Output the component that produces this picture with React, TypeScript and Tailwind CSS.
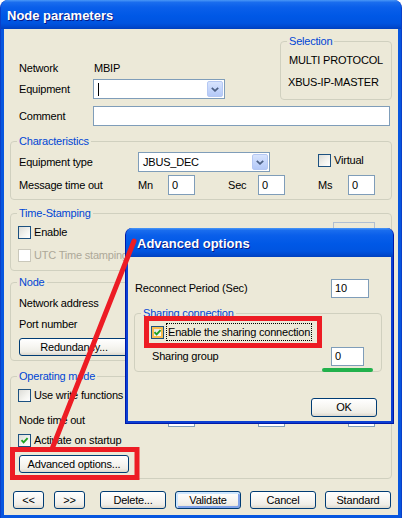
import React from "react";

function Check({ checked = false, disabled = false, hover = false }: { checked?: boolean; disabled?: boolean; hover?: boolean }) {
  const base = disabled
    ? "border-[#CAC8BB] bg-white"
    : "border-[#1C5180] bg-[linear-gradient(135deg,#DCDCD7_0%,#F4F4F0_60%,#FFFFFF_100%)]";
  return (
    <span
      className={`w-[13px] h-[13px] shrink-0 border flex items-center justify-center ${base} ${
        hover ? "shadow-[inset_0_0_0_2px_#F8BD4E]" : ""
      }`}
    >
      {checked && (
        <svg width="7" height="7" viewBox="0 0 7 7" className="overflow-visible">
          <polyline points="0.5,3.2 2.6,5.3 6.6,1.1" fill="none" stroke="#21A121" strokeWidth="1.9" />
        </svg>
      )}
    </span>
  );
}

function TextBox({ value = "", className = "" }: { value?: string; className?: string }) {
  return (
    <div className={`shrink-0 border border-[#7F9DB9] bg-white flex items-center pl-[3px] ${className}`}>{value}</div>
  );
}

function Combo({ value = "", caret = false, className = "" }: { value?: string; caret?: boolean; className?: string }) {
  return (
    <div className={`h-[20px] shrink-0 border border-[#7F9DB9] bg-white flex items-stretch p-[1px] ${className}`}>
      <div className="flex-1 flex items-center pl-[3px]">
        {caret && <span className="w-[1px] h-[13px] bg-black" />}
        {value}
      </div>
      <div className="w-[16px] rounded-[2px] border border-[#B5C8F3] bg-[linear-gradient(180deg,#D8E4FD_0%,#C5D6FB_50%,#B4C9F7_100%)] flex items-center justify-center">
        <svg width="8" height="5" viewBox="0 0 8 5">
          <polyline points="0.8,0.8 4,3.8 7.2,0.8" fill="none" stroke="#4D6185" strokeWidth="1.8" />
        </svg>
      </div>
    </div>
  );
}

function Btn({ children, className = "", focused = false }: { children: React.ReactNode; className?: string; focused?: boolean }) {
  return (
    <div
      className={`shrink-0 border border-[#003C74] rounded-[3px] bg-[linear-gradient(180deg,#FFFFFF_0%,#F7F6F2_45%,#EFEDE6_80%,#DCD7CC_100%)] flex items-center justify-center text-black ${
        focused ? "shadow-[inset_1px_1px_0_1px_#CEE7FF,inset_-1px_-1px_0_1px_#7FA2E8]" : ""
      } ${className}`}
    >
      {children}
    </div>
  );
}

function Legend({ children, className = "-ml-[2px]" }: { children: React.ReactNode; className?: string }) {
  return <legend className={`px-[2px] leading-[13px] text-[#0046D5] ${className}`}>{children}</legend>;
}

export default function App() {
  return (
    <div className="relative w-[402px] h-[518px] bg-white text-[11px] leading-[13px] tracking-[-0.2px] text-black font-['Liberation_Sans',Arial,sans-serif]">
      {/* Main window */}
      <div className="w-full h-full flex flex-col rounded-t-[8px] overflow-hidden bg-[#0756DF] border-l border-r border-[#0A3FC8]">
        <div className="h-[29px] shrink-0 bg-[linear-gradient(180deg,#4A98F6_0%,#1A6DEE_8%,#0A5FEA_25%,#0058E6_55%,#0054E0_80%,#0049CF_92%,#0040BE_100%)] flex items-center pl-[6px] pt-[2px] text-white font-bold text-[13px] tracking-normal [text-shadow:1px_1px_0_#0A1883]">
          Node parameters
        </div>
        <div className="flex-1 mx-[3px] mb-[3px] bg-[#ECE9D8] px-[6px] pt-[6px] flex flex-col">
          {/* top section */}
          <div className="flex h-[65px]">
            <div className="w-[260px] pt-[23px] pl-[9px] flex flex-col gap-[1px]">
              <div className="flex items-center h-[20px]">
                <span className="w-[74px]">Network</span>
                <span className="pl-[1px]">MBIP</span>
              </div>
              <div className="flex items-center h-[20px]">
                <span className="w-[74px]">Equipment</span>
                <Combo caret className="w-[132px]" />
              </div>
            </div>
            <fieldset className="ml-auto w-[112px] h-[65px] border border-[#D0D0BF] rounded-[4px] px-[8px]">
              <Legend>Selection</Legend>
              <div className="mt-[6px]">MULTI PROTOCOL</div>
              <div className="mt-[9px] -ml-px">XBUS-IP-MASTER</div>
            </fieldset>
          </div>

          <div className="mt-[6px] flex items-center h-[20px] pl-[9px] pr-[2px]">
            <span className="w-[74px]">Comment</span>
            <TextBox className="flex-1 h-[20px]" />
          </div>

          {/* Characteristics */}
          <fieldset className="mt-[9px] border border-[#D0D0BF] rounded-[4px] px-[8px] pb-[4px]">
            <Legend>Characteristics</Legend>
            <div className="mt-[4px] h-[20px] flex items-start">
              <span className="w-[119px] self-center">Equipment type</span>
              <Combo value="JBUS_DEC" className="w-[132px]" />
              <div className="ml-[48px] mt-[2px] flex items-center gap-[3px]">
                <Check />
                <span>Virtual</span>
              </div>
            </div>
            <div className="mt-[3px] h-[20px] flex items-center">
              <span className="w-[119px]">Message time out</span>
              <span className="w-[30px]">Mn</span>
              <TextBox value="0" className="w-[27px] h-[20px]" />
              <span className="ml-[33px] w-[30px]">Sec</span>
              <TextBox value="0" className="w-[27px] h-[20px]" />
              <span className="ml-[33px] w-[30px]">Ms</span>
              <TextBox value="0" className="w-[27px] h-[20px]" />
            </div>
          </fieldset>

          {/* Time-Stamping */}
          <fieldset className="mt-[7px] border border-[#D0D0BF] rounded-[4px] px-[8px] pb-[5px]">
            <Legend>Time-Stamping</Legend>
            <div className="mt-[2px] h-[20px] flex items-center">
              <div className="-ml-px flex items-center gap-[3px]">
                <Check />
                <span>Enable</span>
              </div>
              <div className="ml-auto mr-[8px] w-[42px] h-[20px] border border-[#AFBFD2] bg-[#ECE9D8]" />
            </div>
            <div className="mt-[3px] h-[20px] flex items-center">
              <div className="-ml-px flex items-center gap-[3px] text-[#ACA899]">
                <Check disabled />
                <span>UTC Time stamping</span>
              </div>
            </div>
          </fieldset>

          {/* Node */}
          <fieldset className="mt-[5px] border border-[#D0D0BF] rounded-[4px] px-[8px] pb-[4px]">
            <Legend>Node</Legend>
            <div className="mt-[4px] h-[20px] flex items-center">Network address</div>
            <div className="mt-[1px] h-[20px] flex items-center">Port number</div>
            <Btn className="mt-[4px] w-[110px] h-[18px]">Redundancy...</Btn>
          </fieldset>

          {/* Operating mode */}
          <fieldset className="mt-[9px] border border-[#D0D0BF] rounded-[4px] px-[8px] pb-[5px]">
            <Legend>Operating mode</Legend>
            <div className="mt-[2px] h-[20px] flex items-center">
              <div className="-ml-px flex items-center gap-[3px]">
                <Check />
                <span>Use write functions</span>
              </div>
            </div>
            <div className="mt-[5px] h-[20px] flex items-start">
              <span className="w-[119px] self-center">Node time out</span>
              <span className="w-[30px] self-center">Mn</span>
              <TextBox value="0" className="w-[27px] h-[17px]" />
              <span className="ml-[33px] w-[30px] self-center">Sec</span>
              <TextBox value="0" className="w-[27px] h-[17px]" />
              <span className="ml-[33px] w-[30px] self-center">Ms</span>
              <TextBox value="0" className="w-[27px] h-[17px]" />
            </div>
            <div className="h-[20px] flex items-center">
              <div className="-ml-px flex items-center gap-[3px]">
                <Check checked />
                <span>Activate on startup</span>
              </div>
            </div>
            <Btn className="mt-[5px] w-[110px] h-[18px]">Advanced options...</Btn>
          </fieldset>

          {/* Bottom buttons */}
          <div className="mt-[12px] flex pl-[3px]">
            <Btn className="w-[31px] h-[18px]">&lt;&lt;</Btn>
            <Btn className="ml-[10px] w-[31px] h-[18px]">&gt;&gt;</Btn>
            <Btn className="ml-[15px] w-[66px] h-[18px]">Delete...</Btn>
            <Btn focused className="ml-[9px] w-[66px] h-[18px]">Validate</Btn>
            <Btn className="ml-[9px] w-[66px] h-[18px]">Cancel</Btn>
            <Btn className="ml-[9px] w-[66px] h-[18px]">Standard</Btn>
          </div>
        </div>
      </div>

      {/* Advanced options dialog (window over the main one) */}
      <div className="absolute left-[125px] top-[228px] w-[269px] h-[196px] flex flex-col rounded-t-[7px] overflow-hidden bg-[#0B3FD3] border-l border-r border-b border-[#0019A8]">
        <div className="h-[29px] shrink-0 bg-[linear-gradient(180deg,#4A98F6_0%,#1A6DEE_8%,#0A5FEA_25%,#0058E6_55%,#0054E0_80%,#0049CF_92%,#0040BE_100%)] flex items-center pl-[11px] pt-[2px] text-white font-bold text-[13px] tracking-normal [text-shadow:1px_1px_0_#0A1883]">
          Advanced options
        </div>
        <div className="flex-1 mx-[2px] mb-[2px] bg-[#ECE9D8] flex flex-col">
          <div className="mt-[21px] h-[20px] flex items-center pl-[7px] pr-[22px]">
            <span className="flex-1">Reconnect Period (Sec)</span>
            <TextBox value="10" className="w-[38px] h-[19px]" />
          </div>
          <fieldset className="mt-[9px] ml-[6px] mr-[9px] border border-[#D0D0BF] rounded-[4px] pl-[16px] pr-[17px] pb-[5px]">
            <Legend className="-ml-[10px]">Sharing connection</Legend>
            <div className="mt-[3px] h-[18px] flex items-center">
              <Check checked hover />
              <span className="ml-[2px] h-[18px] border border-dotted border-black px-[1px] flex items-center">
                Enable the sharing connection
              </span>
            </div>
            <div className="mt-[5px] h-[20px] flex items-center">
              <span className="pl-[1px]">Sharing group</span>
              <TextBox value="0" className="ml-auto w-[33px] h-[19px]" />
            </div>
          </fieldset>
          <Btn className="mt-[26px] self-end mr-[14px] w-[66px] h-[19px]">OK</Btn>
        </div>
      </div>

      {/* Annotations */}
      <svg className="absolute inset-0 pointer-events-none" width="402" height="518" viewBox="0 0 402 518">
        <line x1="134" y1="241" x2="52" y2="449" stroke="#ED1C24" strokeWidth="5" strokeLinecap="round" />
        <rect x="12.5" y="449.5" width="124.5" height="28" fill="none" stroke="#ED1C24" strokeWidth="5" />
        <rect x="146.5" y="318.5" width="173" height="27" fill="none" stroke="#ED1C24" strokeWidth="5" />
        <line x1="324" y1="370" x2="371" y2="370" stroke="#22B14C" strokeWidth="4" strokeLinecap="round" />
      </svg>
    </div>
  );
}
